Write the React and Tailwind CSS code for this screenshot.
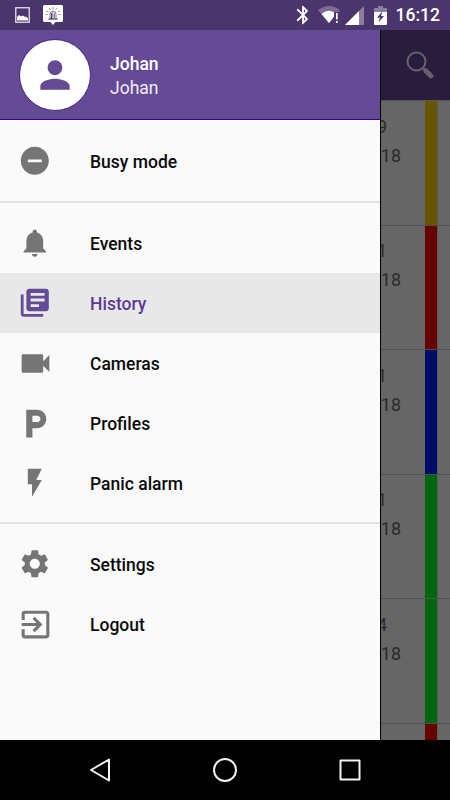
import React from 'react';
import {
  MdRemoveCircle,
  MdNotifications,
  MdLibraryBooks,
  MdVideocam,
  MdLocalParking,
  MdFlashOn,
  MdSettings,
  MdExitToApp,
  MdPerson,
  MdBluetooth,
} from 'react-icons/md';

const menuGroups = [
  [{ label: 'Busy mode', icon: MdRemoveCircle }],
  [
    { label: 'Events', icon: MdNotifications },
    { label: 'History', icon: MdLibraryBooks, active: true },
    { label: 'Cameras', icon: MdVideocam, size: 37 },
    { label: 'Profiles', icon: MdLocalParking, size: 37 },
    { label: 'Panic alarm', icon: MdFlashOn },
  ],
  [
    { label: 'Settings', icon: MdSettings },
    { label: 'Logout', icon: MdExitToApp, size: 37 },
  ],
];

const historyRows = [
  { id: 1, time: '9', date: '18', color: 'bg-[#665600]' },
  { id: 2, time: '1', date: '18', color: 'bg-[#660000]' },
  { id: 3, time: '1', date: '18', color: 'bg-[#000d66]' },
  { id: 4, time: '1', date: '18', color: 'bg-[#00660d]' },
  { id: 5, time: '4', date: '18', color: 'bg-[#00660d]' },
  { id: 6, time: '', date: '', color: 'bg-[#660000]' },
];

const StatusBar = () => (
  <div className="h-[30px] shrink-0 bg-[#4a366c] flex items-center justify-between pl-[15px] pr-[10px] text-white">
    <div className="flex items-center gap-[13px]">
      <svg width="15" height="16" viewBox="0 0 15 16">
        <rect x="0.75" y="0.75" width="13.5" height="14.5" fill="none" stroke="#e4e0ea" strokeWidth="1.3" />
        <path d="M2 13.500V10l2-2 2 1.500 2-1 2 1.500 1-.5 2 2v2z" fill="#fff" />
      </svg>
      <svg width="20" height="21" viewBox="0 0 20 21">
        <path d="M1.500 0h17A1.500 1.500 0 0 1 20 1.500v14a1.500 1.500 0 0 1-1.500 1.500h-6L10 20l-2.500-3h-6A1.500 1.500 0 0 1 0 15.500v-14A1.500 1.500 0 0 1 1.500 0z" fill="#fff" />
        <path d="M10 2v2.500M6.300 3.200l1.200 1.800M13.700 3.200l-1.200 1.800M3.300 6l1.900 1M16.700 6l-1.900 1M2.500 9.500h2M17.500 9.500h-2" fill="none" stroke="#4a366c" strokeWidth="0.6" />
        <path d="M7 14V9a3 2.800 0 0 1 6 0v5" fill="none" stroke="#4a366c" strokeWidth="0.7" />
        <path d="M5.500 14h9" stroke="#4a366c" strokeWidth="1.2" />
        <path d="M8 8.500L9.500 7v7H8z" fill="#4a366c" />
        <path d="M10.500 7.500l1.500 1V14h-1.500z" fill="#8a7da1" />
      </svg>
    </div>
    <div className="flex items-center">
      <MdBluetooth size={22} className="mr-[4px]" />
      <svg width="22" height="18" viewBox="0 0 22 18" className="mr-[5px]">
        <path d="M0 4Q11-4 22 4l-4 5h-3v4l-4 4z" fill="#7a6a94" />
        <path d="M3.500 8Q10 2.500 16.500 6.500V10l-5.500 7z" fill="#fff" />
        <path d="M16 6h6v12h-6z" fill="#4a366c" />
        <path d="M18 7h1.700v6.500H18zM18 15h1.700v2H18z" fill="#fff" />
      </svg>
      <svg width="19" height="19" viewBox="0 0 19 19" className="mr-[10px]">
        <path d="M0 19L19 0v19z" fill="#8a7da1" />
        <path d="M0 19L14 5v14z" fill="#fff" />
      </svg>
      <svg width="13" height="19" viewBox="0 0 13 19" className="mr-[9px]">
        <path d="M4 0h5v2h4v6H0V2h4z" fill="#8a7da1" />
        <path d="M0 6h13v12a1 1 0 0 1-1 1H1a1 1 0 0 1-1-1z" fill="#fff" />
        <path d="M8.500 5L3 11.700h3L4.500 16.500 10 10H7z" fill="#4a366c" />
      </svg>
      <span className="text-[17.5px] leading-[20px] font-medium">16:12</span>
    </div>
  </div>
);

const HistoryPage = () => (
  <div className="h-full bg-[#666666] flex flex-col overflow-hidden">
    <div className="h-[71px] shrink-0 border-b border-[#555555] bg-[#281d3c] flex items-center justify-end pr-[16px]">
      <svg width="28" height="28" viewBox="0 0 28 28" fill="none" stroke="#69616f">
        <circle cx="10.500" cy="10.500" r="9" strokeWidth="2" />
        <path d="M17 17l3 3" strokeWidth="2.500" />
        <path d="M20 20l4.800 4.800" strokeWidth="5" strokeLinecap="round" />
      </svg>
    </div>
    {historyRows.map((row) => (
      <div
        key={row.id}
        className="h-[124.6px] shrink-0 border-b border-[#505050] flex justify-end pr-[12px]"
      >
        <div className="flex flex-col items-end w-[40px] mr-[24px] pt-[14.5px] text-[18px] leading-[22px] text-[#2b2b2b]">
          <span className="h-[29px] mr-[14px]">{row.time}</span>
          <span>{row.date}</span>
        </div>
        <div className={`w-[13px] border-r border-[#5b5b5b] ${row.color}`} />
      </div>
    ))}
  </div>
);

const MenuItem = ({ label, icon: Icon, size = 33.6, active }) => (
  <a
    className={`h-[60px] flex items-center text-[17.5px] font-medium ${
      active ? 'bg-[#e8e8e8] text-[#5a3a96]' : 'text-[#0a0a0a]'
    }`}
  >
    <span className="w-[70px] mr-[20px] flex justify-center">
      <Icon size={size} className={active ? 'text-[#654a96]' : 'text-[#757575]'} />
    </span>
    <span className="pt-0.5">{label}</span>
  </a>
);

const Drawer = () => (
  <aside className="absolute inset-y-0 left-0 w-[381px] bg-[#fafafa] border-r border-black flex flex-col">
    <div className="h-[90px] shrink-0 bg-[#654a96] border-b border-[#3c007d] flex items-center pl-[19px] text-white">
      <div className="size-[72px] rounded-full bg-white border border-[#4a2588] flex items-center justify-center">
        <MdPerson size={44} className="text-[#654a96]" />
      </div>
      <div className="ml-[19px] pt-[2px] text-[17.5px] leading-[24px]">
        <p className="font-medium">Johan</p>
        <p className="text-[#f0edf5]">Johan</p>
      </div>
    </div>
    {menuGroups.map((group, i) => (
      <nav
        key={i}
        className={i === 0 ? 'pt-[11px] pb-[10px]' : 'border-t-2 border-[#e2e2e2] pt-[10px] pb-[9px]'}
      >
        {group.map((item) => (
          <MenuItem key={item.label} {...item} />
        ))}
      </nav>
    ))}
  </aside>
);

const NavBar = () => (
  <div className="h-[60px] shrink-0 bg-black flex items-center justify-between px-[88px]">
    <svg width="24" height="26" viewBox="0 0 24 26" fill="none" stroke="#f2f2f2" strokeWidth="2" strokeLinejoin="round">
      <path d="M3 13L21 2.500v21z" />
    </svg>
    <svg width="26" height="26" viewBox="0 0 26 26" fill="none" stroke="#f2f2f2" strokeWidth="2">
      <circle cx="13" cy="13" r="11" />
    </svg>
    <svg width="24" height="24" viewBox="0 0 24 24" fill="none" stroke="#f2f2f2" strokeWidth="2" strokeLinejoin="round">
      <rect x="2.500" y="2.500" width="19" height="19" />
    </svg>
  </div>
);

const App = () => {
  return (
    <div className="w-[450px] h-[800px] flex flex-col overflow-hidden font-[Roboto,sans-serif]">
      <StatusBar />
      <div className="relative h-[710px] overflow-hidden">
        <HistoryPage />
        <Drawer />
      </div>
      <NavBar />
    </div>
  );
};

export default App;
